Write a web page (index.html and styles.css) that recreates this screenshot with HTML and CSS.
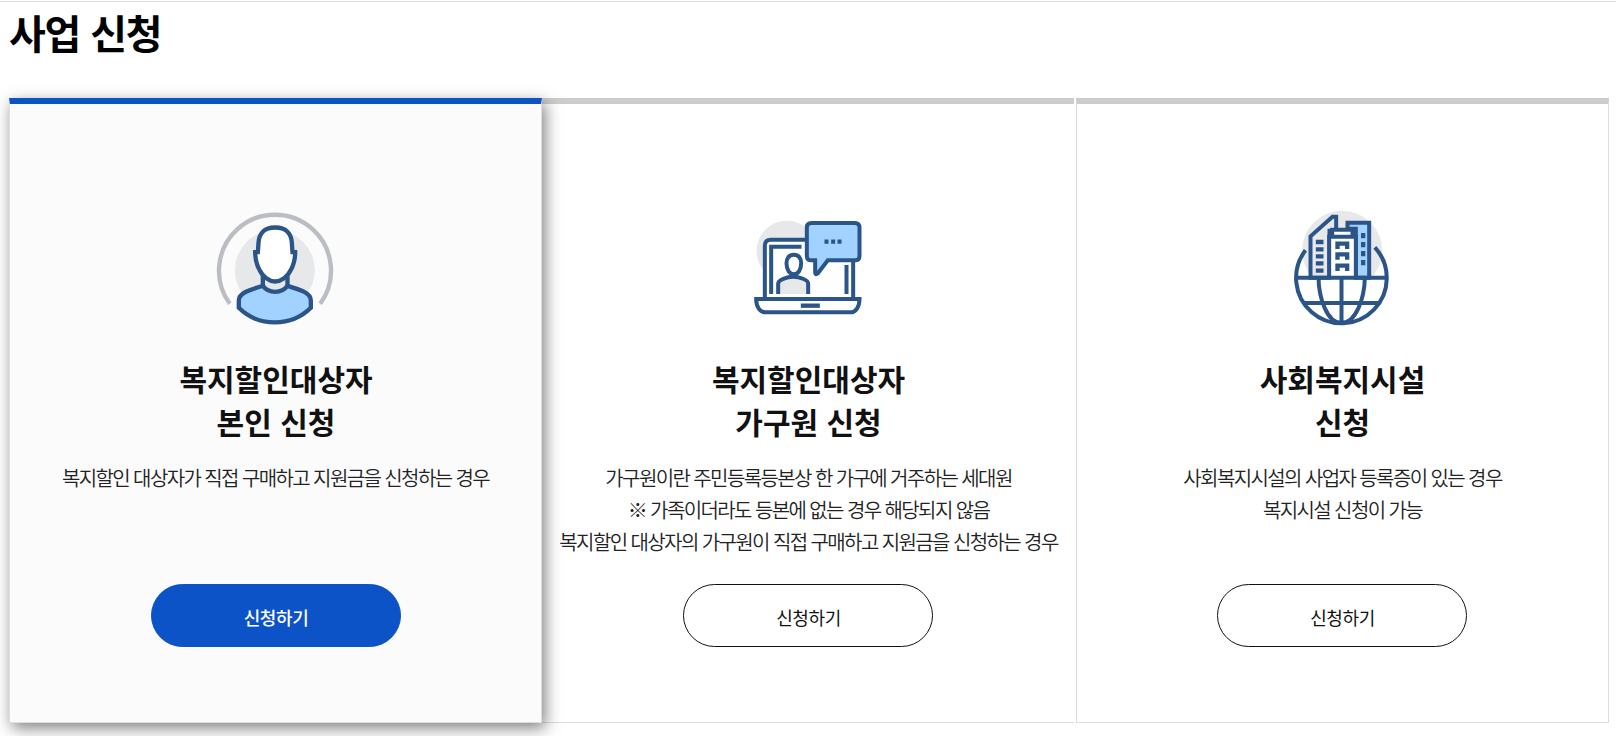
FILE: index.html
```
<!DOCTYPE html>
<html lang="ko">
<head>
    <meta charset="UTF-8">
    <meta name="viewport" content="width=device-width, initial-scale=1.0">
    <title>사업 신청</title>
    <link rel="stylesheet" href="styles.css">
</head>
<body>
    <h1>사업 신청</h1>
    <div class="apply-list">
        <div class="card active">
            <svg class="icon" viewBox="48.5 25.5 360 360">
                <circle class="shade" cx="225" cy="212" r="120"/>
                <path class="ring" d="M90 313A168 168 0 1 1 361 313"/>
                <path class="neck" d="M189 228V258Q203 277 226 277T262 258V228Z"/>
                <path class="line white" d="M226 84C192 84 177 104 176 130L174 158H166C166 182 171 198 180 213C188 231 208 246 226 246S264 231 272 213C281 198 286 182 286 158H278L276 130C275 104 260 84 226 84Z"/>
                <path class="line blue" d="M189 259C206 283 246 283 263 259C300 270 333 280 333 303V325C275 383 175 383 117 325V303C117 280 152 270 189 259Z"/>
                <path class="line" d="M189 230V259M263 230V259"/>
            </svg>
            <h2>복지할인대상자<br>본인 신청</h2>
            <p>복지할인 대상자가 직접 구매하고 지원금을 신청하는 경우</p>
            <a href="#" class="button">신청하기</a>
        </div>
        <div class="card">
            <svg class="icon" viewBox="25.5 24 360 360">
                <circle class="shade" cx="139" cy="153" r="91"/>
                <path class="line thin white" d="M73 297V137Q73 119 91 119H338V297"/>
                <path class="line thin" d="M92 282V140H183M318 195V282"/>
                <path class="line thin shade" d="M113 282V251C113 241 139 230 158 230S203 240 203 251V282"/>
                <path class="line thin white" d="M160 164C145 164 138 175 138 190C138 208 147 223 160 223S182 208 182 190C182 175 175 164 160 164Z"/>
                <path class="line thin white" d="M47 297H357C357 320 346 337 330 337H76C58 337 47 320 47 297Z"/>
                <path class="line" d="M181 317H238"/>
                <path class="line thin blue" d="M213 69H343Q357 69 357 83V167Q357 181 343 181H262L232 220Q224 227 224 217V181H213Q199 181 199 167V83Q199 69 213 69Z"/>
                <path class="line" d="M252 125H264M272 125H284M291 125H303"/>
            </svg>
            <h2>복지할인대상자<br>가구원 신청</h2>
            <p>가구원이란 주민등록등본상 한 가구에 거주하는 세대원<br>※ 가족이더라도 등본에 없는 경우 해당되지 않음<br>복지할인 대상자의 가구원이 직접 구매하고 지원금을 신청하는 경우</p>
            <a href="#" class="button">신청하기</a>
        </div>
        <div class="card">
            <svg class="icon" viewBox="7.5 24 360 360">
                <circle class="shade" cx="185" cy="152" r="120"/>
                <path class="white" d="M47 233H319A136 136 0 0 1 47 233Z"/>
                <path class="line thin" d="M75 151A136 136 0 1 0 283 142"/>
                <path class="line thin shade" d="M90 233V109L156 50H167V92H147V233Z"/>
                <path class="line thin blue" d="M201 86V68H266V233H226V86Z"/>
                <path class="line thin white" d="M155 108V89H216V108M146 233V110H226V233"/>
                <path class="line" d="M106 126H129M106 148H129M106 169H129M106 190H129M106 212H129"/>
                <path class="line" d="M171 147V131H200V147M171 179V163H200V179M171 213V197H200V213"/>
                <path class="line" d="M248 99V115M248 126V142M248 153V169M248 180V196"/>
                <path class="line thin" d="M47 233H319M70 309H296M183 233V369M114 233C115 295 140 369 183 369S252 295 253 233"/>
            </svg>
            <h2>사회복지시설<br>신청</h2>
            <p>사회복지시설의 사업자 등록증이 있는 경우<br>복지시설 신청이 가능</p>
            <a href="#" class="button">신청하기</a>
        </div>
    </div>
</body>
</html>
```
FILE: styles.css
```
* { box-sizing: border-box; }
body {
    min-height: 736px;
    margin: 0;
    padding: 0 7px 0 9px;
    border-top: 1px solid #fff;
    background: #fff;
    color: #111;
    font-family: "Noto Sans CJK KR", sans-serif;
}
h1 {
    margin: 0 -7px 0 -9px;
    padding: 0 9px;
    height: 97px;
    border-top: 1px solid #ddd;
    color: #000;
    font-size: 40px;
    font-weight: 700;
    line-height: 60px;
    letter-spacing: -1.2px;
}
.apply-list {
    display: grid;
    grid-template-columns: 533px 532px 533px;
}
.card {
    display: flex;
    flex-direction: column;
    align-items: center;
    height: 625px;
    padding-top: 104px;
    border: 1px solid #ddd;
    border-top: 6px solid #ccc;
    text-align: center;
    white-space: nowrap;
}
.card:nth-child(2) {
    border-left: 0;
    border-right: 0;
}
.card:nth-child(3) {
    margin: 0 -2px 0 2px;
    padding-right: 1px;
}
.card.active {
    position: relative;
    background: #fbfbfb;
    border-top-color: #0c53c8;
    box-shadow: 3px 5px 15px rgba(0, 0, 0, 0.5);
}
.icon {
    width: 120px;
    height: 120px;
}
.card h2 {
    margin: 29px 0 0;
    padding-left: 1px;
    font-size: 30px;
    font-weight: 700;
    line-height: 43px;
}
.card p {
    height: 96px;
    margin: 19px 0 26px;
    color: #222;
    font-size: 20px;
    font-weight: 350;
    line-height: 32px;
    letter-spacing: -1.6px;
}
.card:not(.active) .icon,
.card:not(.active) p { margin-left: 1px; }
.button {
    width: 250px;
    height: 63px;
    padding-left: 1px;
    border: 1px solid #111;
    border-radius: 32px;
    color: #111;
    font-size: 18px;
    line-height: 64px;
    letter-spacing: -0.4px;
    text-decoration: none;
}
.active .button {
    background: #0c53c8;
    border-color: #0c53c8;
    color: #fff;
    font-weight: 500;
}

/* icons */
.icon path { fill: none; }
.icon .shade { fill: #e7e8ea; }
.icon .white { fill: #fff; }
.icon .blue { fill: #a2d2ff; }
.icon .neck { fill: #e7e8ea; }
.icon .line {
    stroke: #2b5488;
    stroke-width: 13;
}
.icon .thin { stroke-width: 12; }
.icon .ring {
    stroke: #babdc3;
    stroke-width: 13;
}
```
